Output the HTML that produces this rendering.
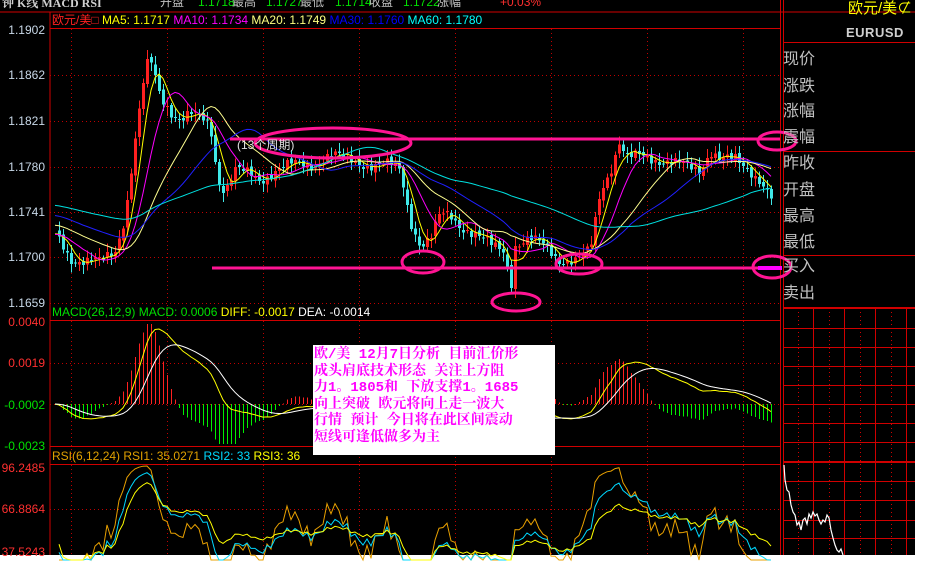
<!DOCTYPE html>
<html><head><meta charset="utf-8"><style>
html,body{margin:0;padding:0;background:#fff;}
body{width:930px;height:583px;overflow:hidden;position:relative;font-family:"Liberation Sans","Noto Sans CJK SC",sans-serif;}
#bk{position:absolute;left:0;top:0;width:915px;height:555px;background:#000;}
.t{position:absolute;white-space:nowrap;font-size:12px;line-height:14px;}
.ax{position:absolute;right:885px;font-size:12px;line-height:14px;text-align:right;white-space:nowrap;}
.rl{position:absolute;left:783px;color:#c0c0c0;font-size:16px;line-height:18px;font-family:"Liberation Sans","WenQuanYi Zen Hei",sans-serif;}
#box{position:absolute;left:313px;top:345px;width:242px;height:110px;background:#fff;color:#ff00ff;font-family:"Liberation Mono","Noto Serif CJK SC",monospace;font-size:14px;line-height:16.5px;font-weight:bold;padding:2px 0 0 1px;box-sizing:border-box;letter-spacing:0;}
</style></head><body>
<div id="bk"></div>
<svg width="930" height="583" style="position:absolute;left:0;top:0" id="sv" shape-rendering="crispEdges">
<g stroke="#d00000" fill="none">
<line x1="0" y1="12" x2="915" y2="12"/>
<line x1="50" y1="28.5" x2="780" y2="28.5"/>
<line x1="50" y1="12" x2="50" y2="555"/>
<line x1="780.5" y1="0" x2="780.5" y2="555"/>
<line x1="783.5" y1="0" x2="783.5" y2="555"/>
<line x1="50" y1="320.5" x2="780" y2="320.5"/>
<line x1="50" y1="446.5" x2="780" y2="446.5"/>
<line x1="50" y1="464.5" x2="780" y2="464.5"/>
<line x1="783" y1="42.5" x2="915" y2="42.5"/>
<line x1="783" y1="151.5" x2="915" y2="151.5"/>
<line x1="783" y1="255.5" x2="915" y2="255.5"/>
<line x1="783" y1="308" x2="915" y2="308" stroke-width="2"/>
<line x1="783" y1="462" x2="915" y2="462" stroke-width="2"/>
</g>
<g id="grid" stroke="#c00000" stroke-dasharray="1,3" fill="none"></g>
<g id="rgrid" stroke="#d00000" fill="none"></g>
<g id="cand"></g>
<g id="ma" fill="none" stroke-width="1" shape-rendering="auto"></g>
<g id="macd"></g>
<g id="rsi" fill="none" shape-rendering="auto"></g>
<polyline fill="none" stroke="#fff" stroke-width="1.2" shape-rendering="auto" points="784,465 785,480 787,490 789,492 791,505 793,512 795,515 797,525 799,522 801,530 803,520 805,518 807,524 809,514 811,518 813,512 815,516 817,514 819,520 821,524 823,520 825,522 827,515 829,518 831,530 833,538 835,545 837,550 839,552 841,549 843,555"/>
<g stroke="#ff1493" stroke-width="3" fill="none" shape-rendering="auto">
<line x1="230" y1="139" x2="780" y2="139"/>
<line x1="212" y1="268" x2="780" y2="268"/>
<ellipse cx="333" cy="143" rx="78" ry="15"/>
<ellipse cx="423" cy="262" rx="21" ry="11"/>
<ellipse cx="516" cy="302" rx="24" ry="9"/>
<ellipse cx="579" cy="264" rx="23" ry="10"/>
<ellipse cx="777" cy="141" rx="19" ry="9"/>
<ellipse cx="772" cy="267" rx="19" ry="11"/>
</g>
<line x1="758" y1="268" x2="782" y2="268" stroke="#ff00ff" stroke-width="4"/>
</svg>

<div class="t" style="left:2px;top:-4px;color:#d0d0d0;font-weight:bold;font-family:'Liberation Serif','Noto Serif CJK SC',serif;">钟 K线 MACD RSI</div>
<div class="t" style="left:160px;top:-5px;color:#c0c0c0">开盘</div>
<div class="t" style="left:198px;top:-5px;color:#00e000">1.1718</div><div class="t" style="left:232px;top:-5px;color:#c0c0c0">最高</div>
<div class="t" style="left:266px;top:-5px;color:#00e000">1.1727</div><div class="t" style="left:300px;top:-5px;color:#c0c0c0">最低</div>
<div class="t" style="left:335px;top:-5px;color:#00e000">1.1714</div><div class="t" style="left:369px;top:-5px;color:#c0c0c0">收盘</div>
<div class="t" style="left:403px;top:-5px;color:#00e000">1.1722</div><div class="t" style="left:437px;top:-5px;color:#c0c0c0">涨幅</div>
<div class="t" style="left:500px;top:-5px;color:#ff3030">+0.03%</div>

<div class="t" style="left:52px;top:13px;"><span style="color:#ff2020">欧元/美□</span> <span style="color:#ffff00">MA5: 1.1717</span> <span style="color:#ff00ff">MA10: 1.1734</span> <span style="color:#ffff80">MA20: 1.1749</span> <span style="color:#0000ff">MA30: 1.1760</span> <span style="color:#00ffff">MA60: 1.1780</span></div>

<div class="ax" style="top:23px;color:#c8d8e8">1.1902</div>
<div class="ax" style="top:68px;color:#c8d8e8">1.1862</div>
<div class="ax" style="top:114px;color:#c8d8e8">1.1821</div>
<div class="ax" style="top:160px;color:#c8d8e8">1.1780</div>
<div class="ax" style="top:205px;color:#c8d8e8">1.1741</div>
<div class="ax" style="top:250px;color:#c8d8e8">1.1700</div>
<div class="ax" style="top:296px;color:#c8d8e8">1.1659</div>

<div class="t" style="left:52px;top:305px;"><span style="color:#00e000">MACD(26,12,9) MACD: 0.0006</span> <span style="color:#ffff00">DIFF: -0.0017</span> <span style="color:#fff">DEA: -0.0014</span></div>
<div class="ax" style="top:315px;color:#ff3030">0.0040</div>
<div class="ax" style="top:356px;color:#ff3030">0.0019</div>
<div class="ax" style="top:398px;color:#00e000">-0.0002</div>
<div class="ax" style="top:439px;color:#00e000">-0.0023</div>

<div class="t" style="left:52px;top:449px;"><span style="color:#e0a000">RSI(6,12,24) RSI1: 35.0271</span> <span style="color:#00d8ff">RSI2: 33</span> <span style="color:#ffff00">RSI3: 36</span></div>
<div class="ax" style="top:461px;color:#ff3030">96.2485</div>
<div class="ax" style="top:502px;color:#ff3030">66.8864</div>
<div class="ax" style="top:545px;color:#ff3030">37.5243</div>

<div class="t" style="left:237px;top:138px;color:#e0e0e0">(13个周期)</div>

<div id="box">欧/美 12月7日分析 目前汇价形<br>成头肩底技术形态 关注上方阻<br>力1。1805和 下放支撑1。1685<br>向上突破 欧元将向上走一波大<br>行情 预计 今日将在此区间震动<br>短线可逢低做多为主</div>

<div class="t" style="left:848px;top:0px;color:#ffff00;font-size:15px;line-height:17px">欧元/美⊄</div>
<div class="t" style="left:846px;top:26px;color:#d0d0d0;font-size:13px;font-weight:bold;letter-spacing:0.5px">EURUSD</div>
<div class="rl" style="top:51px">现价</div>
<div class="rl" style="top:78px">涨跌</div>
<div class="rl" style="top:103px">涨幅</div>
<div class="rl" style="top:129px">震幅</div>
<div class="rl" style="top:155px">昨收</div>
<div class="rl" style="top:182px">开盘</div>
<div class="rl" style="top:208px">最高</div>
<div class="rl" style="top:234px">最低</div>
<div class="rl" style="top:258px">买入</div>
<div class="rl" style="top:285px">卖出</div>

<script>
(function(){
var NS="http://www.w3.org/2000/svg";
function el(p,n,a){var e=document.createElementNS(NS,n);for(var k in a)e.setAttribute(k,a[k]);p.appendChild(e);return e;}
var g=document.getElementById('grid');
for(var x=71;x<780;x+=96){el(g,'line',{x1:x+.5,y1:29,x2:x+.5,y2:555});}
[75,121,167,212,257,303,363,404,509].forEach(function(y){el(g,'line',{x1:50,y1:y+.5,x2:780,y2:y+.5});});
var rg=document.getElementById('rgrid');
[328,347,366,385,404,423,442,481,500,520,538].forEach(function(y){el(rg,'line',{x1:783,y1:y+.5,x2:915,y2:y+.5});});
[813,844,875,906].forEach(function(x){el(rg,'line',{x1:x+.5,y1:308,x2:x+.5,y2:555});});
[798,829,860,891].forEach(function(x){el(rg,'line',{x1:x+.5,y1:308,x2:x+.5,y2:555,'stroke-dasharray':'1,3'});});
var K=[[55,232],[70,258],[85,262],[100,262],[115,250],[125,215],[135,140],[145,70],[150,60],[160,95],[170,110],[180,120],[190,115],[200,118],[210,125],[218,180],[225,190],[235,170],[250,175],[260,180],[275,170],[290,165],[310,165],[330,155],[350,160],[370,165],[390,165],[400,170],[410,220],[420,245],[430,240],[440,215],[450,215],[460,225],[475,235],[490,245],[505,250],[510,290],[515,245],[530,240],[545,245],[560,260],[575,262],[590,250],[600,190],[610,170],[620,140],[625,160],[640,155],[660,160],[680,165],[700,170],[710,150],[720,160],[735,160],[750,170],[760,180],[772,200]];
function at(x){for(var i=1;i<K.length;i++){if(x<=K[i][0]){var a=K[i-1],b=K[i];return a[1]+(b[1]-a[1])*(x-a[0])/(b[0]-a[0]);}}return K[K.length-1][1];}
var X=[],C=[];for(var x=55;x<=772;x+=4){X.push(x);C.push(at(x)+Math.sin(x*1.7)*4+Math.sin(x*0.63)*3);}
var cg=document.getElementById('cand');
for(var i=1;i<C.length;i++){var o=C[i-1]+Math.sin(i*2.3)*2,c=C[i];var up=c<o;var col=up?'#ff2020':'#40e8e8';var bt=Math.min(o,c),bb=Math.max(o,c);if(bb-bt<1)bb=bt+1;
var hi=bt-2-Math.abs(Math.sin(i*1.3))*7,lo=bb+2+Math.abs(Math.cos(i*0.9))*7;
el(cg,'rect',{x:X[i],y:hi,width:1,height:lo-hi,fill:col});el(cg,'rect',{x:X[i]-1,y:bt,width:3,height:bb-bt,fill:col});}
var mg=document.getElementById('ma');
[[5,'#ffff00'],[10,'#ff00ff'],[20,'#ffff90'],[30,'#2020ff'],[60,'#00e0e0']].forEach(function(m){var n=m[0],pts=[];for(var i=0;i<C.length;i++){var s=0,k=0;for(var j=Math.max(0,i-n+1);j<=i;j++){s+=C[j];k++;}var v=s/k;if(i<n)v=v*(k/n)+(n===60?205:n===30?215:n===20?225:235)*(1-k/n);pts.push(X[i]+','+v.toFixed(1));}el(mg,'polyline',{points:pts.join(' '),stroke:m[1]});});
var e12=-C[0],e26=-C[0],dea=0,D=[],E=[];for(var i=0;i<C.length;i++){var p=-C[i];e12+=(p-e12)*2/13;e26+=(p-e26)*2/27;var d=e12-e26;dea+=(d-dea)*0.2;D.push(d);E.push(dea);}
var mx=0,hm=0;for(var i=0;i<C.length;i++){mx=Math.max(mx,Math.abs(D[i]));hm=Math.max(hm,Math.abs(D[i]-E[i]));}
var kk=75/mx,kh=80/hm;
var mgp=document.getElementById('macd');var dp=[],ep=[];
for(var i=0;i<C.length;i++){var h=(D[i]-E[i])*kh;var y0=404;var y1=Math.max(322,Math.min(444,y0-h));
el(mgp,'rect',{x:X[i],y:Math.min(y0,y1),width:1,height:Math.max(1,Math.abs(y1-y0)),fill:h>0?'#ff2020':'#00ee00'});
dp.push(X[i]+','+(404-D[i]*kk).toFixed(1));ep.push(X[i]+','+(404-E[i]*kk).toFixed(1));}
el(mgp,'polyline',{points:dp.join(' '),stroke:'#ffff00',fill:'none','shape-rendering':'auto'});el(mgp,'polyline',{points:ep.join(' '),stroke:'#fff',fill:'none','shape-rendering':'auto'});
var rg2=document.getElementById('rsi');
[[6,'#e8a000'],[12,'#00d8ff'],[24,'#ffff00']].forEach(function(r){var n=r[0],au=1,ad=1,pts=[];for(var i=1;i<C.length;i++){var ch=C[i-1]-C[i];au=(au*(n-1)+Math.max(ch,0))/n;ad=(ad*(n-1)+Math.max(-ch,0))/n;var v=100*au/(au+ad);var y=468+(96.25-v)/(58.73)*84;y=Math.max(466,Math.min(560,y));pts.push(X[i]+','+y.toFixed(1));}el(rg2,'polyline',{points:pts.join(' '),stroke:r[1]});});
})();
</script>
</body></html>
